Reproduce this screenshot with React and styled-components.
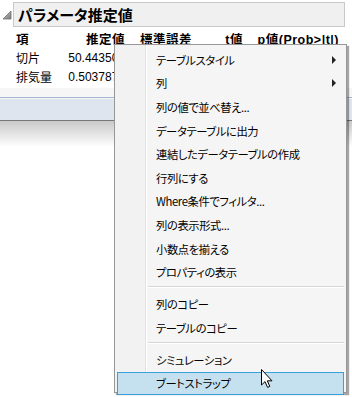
import React from 'react'
import styled, { createGlobalStyle } from 'styled-components';

const Global = createGlobalStyle`
  body {
    margin: 0;
    background: #fff;
    font-family: "Liberation Sans", "Noto Sans CJK JP", sans-serif;
  }
`;

const Page = styled.div`
  position: relative;
  width: 352px;
  height: 397px;
  overflow: hidden;
  background: #fff;
`;

const Report = styled.div`
  height: 97px;
  background: linear-gradient(#fff 0 88px, #f6f6f6 88px);
`;

const TitleRow = styled.div`
  display: flex;
  align-items: center;
  padding: 2px 0 0 2px;
  gap: 1px;
`;

const TitleBox = styled.div`
  width: 326px;
  height: 23px;
  border: 1px solid #c9c9c9;
  background: #f0f0f0;
  display: flex;
  align-items: center;
  padding-left: 4px;
  font-family: "Noto Sans CJK JP", sans-serif;
  font-feature-settings: "palt";
  font-size: 15px;
  font-weight: bold;
  color: #000;
`;

const Table = styled.div`
  padding: 2px 0 0 16px;
  font-size: 12px;
  color: #000;
`;

const Row = styled.div`
  display: grid;
  grid-template-columns: 50px 59px 67px 51px 96px;
  height: 19px;
  font-weight: ${p => (p.$head ? 'bold' : 'normal')};
  font-size: ${p => (p.$head ? '12.5px' : '12px')};
  letter-spacing: ${p => (p.$head ? '0.5px' : '0')};
`;

const Cell = styled.div`
  display: flex;
  align-items: center;
  justify-content: ${p => (p.$right ? 'flex-end' : 'flex-start')};
  white-space: nowrap;
`;

const BlueLine = styled.div`
  height: 1px;
  background: #a9b3d2;
  border-bottom: 1px solid #f4f6fa;
`;

const Band = styled.div`
  height: 21px;
  background: #dfe5ef;
  border-bottom: 1px solid #777;
`;

const Shade = styled.div`
  height: 26px;
  background: linear-gradient(#c9c9c9, #fff);
`;

const Menu = styled.div`
  position: absolute;
  left: 114px;
  top: 44px;
  width: 233px;
  height: 349px;
  padding-top: 3px;
  box-sizing: border-box;
  border: 1px solid #979797;
  background: linear-gradient(to right, #f2f2f2 0 30px, #e2e3e3 30px 31px, #fff 31px 32px, #f5f5f5 32px);
  box-shadow: 2px 2px 1px rgba(0, 0, 0, 0.35);
  font-family: "Noto Sans CJK JP", sans-serif;
  font-feature-settings: "palt";
  font-size: 11.3px;
  letter-spacing: -0.4px;
  color: #000;
`;

const Item = styled.div`
  position: relative;
  height: 23.6px;
  box-sizing: border-box;
  margin: 0 2px;
  padding-left: 38px;
  display: flex;
  align-items: center;
  border: 1px solid ${p => (p.$active ? '#39a0da' : 'transparent')};
  background: ${p => (p.$active ? '#c5e1ef' : 'transparent')};
  white-space: nowrap;
`;

const SubArrow = styled.span`
  position: absolute;
  right: 7px;
  top: 50%;
  margin-top: -4px;
  width: 0;
  height: 0;
  border-top: 4px solid transparent;
  border-bottom: 4px solid transparent;
  border-left: 4px solid #222;
`;

const Separator = styled.div`
  height: 1px;
  margin: 2px 2px 4.4px 33px;
  background: #d7d7d7;
  border-bottom: 1px solid #fff;
`;

const Cursor = styled.svg`
  position: absolute;
  left: 260px;
  top: 368px;
`;

const Disclosure = () => (
  <svg width="10" height="10" viewBox="0 0 10 10">
    <defs>
      <linearGradient id="tri" x1="0" y1="0" x2="1" y2="1">
        <stop offset="0" stopColor="#c8c8c8" />
        <stop offset="1" stopColor="#7a7a7a" />
      </linearGradient>
    </defs>
    <polygon points="9,1 9,9 1,9" fill="url(#tri)" stroke="#6e6e6e" strokeWidth="0.8" />
  </svg>
);

const menuGroups = [
  [
    { label: 'テーブルスタイル', sub: true },
    { label: '列', sub: true },
    { label: '列の値で並べ替え...' },
    { label: 'データテーブルに出力' },
    { label: '連結したデータテーブルの作成' },
    { label: '行列にする' },
    { label: 'Where条件でフィルタ...' },
    { label: '列の表示形式...' },
    { label: '小数点を揃える' },
    { label: 'プロパティの表示' },
  ],
  [{ label: '列のコピー' }, { label: 'テーブルのコピー' }],
  [{ label: 'シミュレーション' }, { label: 'ブートストラップ', active: true }],
];

// only the estimate column shows past the menu
const rows = [
  ['切片', '50.443503'],
  ['排気量', '0.5037872'],
];

export default function App() {
  return (
    <Page>
      <Global />
      <Report>
        <TitleRow>
          <Disclosure />
          <TitleBox>パラメータ推定値</TitleBox>
        </TitleRow>
        <Table>
          <Row $head>
            <Cell>項</Cell>
            <Cell $right>推定値</Cell>
            <Cell $right>標準誤差</Cell>
            <Cell $right>t値</Cell>
            <Cell $right>p値(Prob&gt;|t|)</Cell>
          </Row>
          {rows.map(r => (
            <Row key={r[0]}>
              <Cell>{r[0]}</Cell>
              <Cell $right>{r[1]}</Cell>
            </Row>
          ))}
        </Table>
      </Report>
      <BlueLine />
      <Band />
      <Shade />

      <Menu>
        {menuGroups.map((group, gi) => (
          <React.Fragment key={gi}>
            {gi > 0 && <Separator />}
            {group.map(it => (
              <Item key={it.label} $active={it.active}>
                {it.label}
                {it.sub && <SubArrow />}
              </Item>
            ))}
          </React.Fragment>
        ))}
      </Menu>

      <Cursor width="13" height="21" viewBox="0 0 13 21">
        <path
          d="M1.5 1.5 L1.5 17 L5 13.6 L7.6 19.4 L9.8 18.4 L7.3 12.8 L12 12.8 Z"
          fill="#fff"
          stroke="#000"
          strokeWidth="1"
          strokeLinejoin="miter"
        />
      </Cursor>
    </Page>
  );
}
